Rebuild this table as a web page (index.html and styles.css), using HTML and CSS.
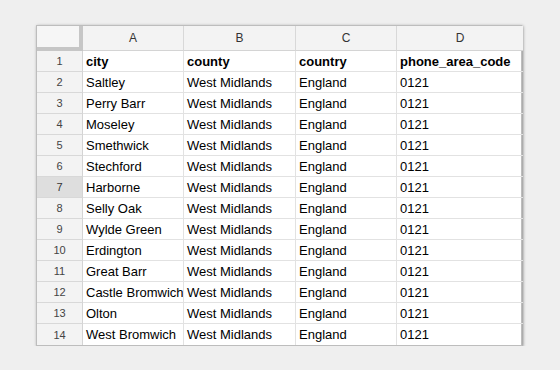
FILE: index.html
```html
<!DOCTYPE html>
<html>
<head>
<meta charset="utf-8">
<link rel="stylesheet" href="styles.css">
</head>
<body>
<div class="sheet">
  <div class="corner"></div>
  <div class="colhead">A</div>
  <div class="colhead">B</div>
  <div class="colhead">C</div>
  <div class="colhead last">D</div>

  <div class="rowhead">1</div><div class="cell bold">city</div><div class="cell bold">county</div><div class="cell bold">country</div><div class="cell bold last">phone_area_code</div>
  <div class="rowhead">2</div><div class="cell">Saltley</div><div class="cell">West Midlands</div><div class="cell">England</div><div class="cell last">0121</div>
  <div class="rowhead">3</div><div class="cell">Perry Barr</div><div class="cell">West Midlands</div><div class="cell">England</div><div class="cell last">0121</div>
  <div class="rowhead">4</div><div class="cell">Moseley</div><div class="cell">West Midlands</div><div class="cell">England</div><div class="cell last">0121</div>
  <div class="rowhead">5</div><div class="cell">Smethwick</div><div class="cell">West Midlands</div><div class="cell">England</div><div class="cell last">0121</div>
  <div class="rowhead">6</div><div class="cell">Stechford</div><div class="cell">West Midlands</div><div class="cell">England</div><div class="cell last">0121</div>
  <div class="rowhead selected">7</div><div class="cell">Harborne</div><div class="cell">West Midlands</div><div class="cell">England</div><div class="cell last">0121</div>
  <div class="rowhead">8</div><div class="cell">Selly Oak</div><div class="cell">West Midlands</div><div class="cell">England</div><div class="cell last">0121</div>
  <div class="rowhead">9</div><div class="cell">Wylde Green</div><div class="cell">West Midlands</div><div class="cell">England</div><div class="cell last">0121</div>
  <div class="rowhead">10</div><div class="cell">Erdington</div><div class="cell">West Midlands</div><div class="cell">England</div><div class="cell last">0121</div>
  <div class="rowhead">11</div><div class="cell">Great Barr</div><div class="cell">West Midlands</div><div class="cell">England</div><div class="cell last">0121</div>
  <div class="rowhead">12</div><div class="cell">Castle Bromwich</div><div class="cell">West Midlands</div><div class="cell">England</div><div class="cell last">0121</div>
  <div class="rowhead">13</div><div class="cell">Olton</div><div class="cell">West Midlands</div><div class="cell">England</div><div class="cell last">0121</div>
  <div class="rowhead bottom">14</div><div class="cell bottom">West Bromwich</div><div class="cell bottom">West Midlands</div><div class="cell bottom">England</div><div class="cell last bottom">0121</div>
</div>
</body>
</html>
```

FILE: styles.css
```css
html, body {
  margin: 0;
  padding: 0;
  background: #efefef;
}

body {
  padding: 25px 0 0 36px;
  font-family: "Liberation Sans", Arial, sans-serif;
}

.sheet {
  display: grid;
  grid-template-columns: 46px 101px 112px 101px 126px;
  grid-template-rows: 25px repeat(14, 21px);
  width: 486px;
  box-sizing: border-box;
  border: 1px solid #bdbdbd;
  background: #fff;
  box-shadow: 1px 1px 3px rgba(0, 0, 0, 0.45);
}

.sheet > div {
  box-sizing: border-box;
  border-right: 1px solid #e2e2e2;
  border-bottom: 1px solid #e2e2e2;
  display: flex;
  align-items: center;
  white-space: nowrap;
  overflow: hidden;
}

.sheet > .last {
  border-right: none;
}

.sheet > .bottom {
  border-bottom: none;
}

.corner {
  background: #f6f6f6;
  border-right: 4px solid #c6c6c6 !important;
  border-bottom: 4px solid #c6c6c6 !important;
}

.colhead {
  background: #f3f3f3;
  justify-content: center;
  font-size: 12px;
  color: #333;
  border-bottom-color: #d4d4d4 !important;
  border-right-color: #d8d8d8 !important;
}

.rowhead {
  background: #f3f3f3;
  justify-content: center;
  font-size: 11px;
  color: #444;
  border-right-color: #d4d4d4 !important;
  border-bottom-color: #d8d8d8 !important;
}

.rowhead.selected {
  background: #dedede;
  color: #333;
}

.cell {
  padding-left: 3px;
  font-size: 13px;
  color: #000;
}

.cell.bold {
  font-weight: bold;
}
```
